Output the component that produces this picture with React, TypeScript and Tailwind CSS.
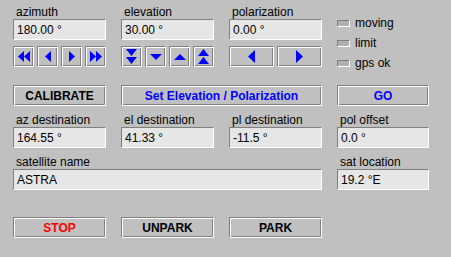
import React from "react";

const BLUE = "#0000ff";

function Field({ label, value, className = "" }: { label: string; value: string; className?: string }) {
  return (
    <div className={`flex flex-col ${className}`}>
      <span className="h-[14px] pl-[3px] text-[12px] leading-[14px] text-black">{label}</span>
      <div className="flex h-[21px] items-center border border-b-white border-l-[#808080] border-r-white border-t-[#808080] bg-[#e6e6e6] pl-[3px] text-[12px] leading-[14px] text-black">
        {value}
      </div>
    </div>
  );
}

function Btn({
  children,
  className = "",
}: {
  children: React.ReactNode;
  className?: string;
}) {
  return (
    <div
      className={`flex h-[21px] items-center justify-center border border-b-white border-l-[#808080] border-r-white border-t-[#808080] bg-[#c0c0c0] text-[12px] font-bold leading-[14px] shadow-[inset_1px_1px_0_#ffffff,inset_-1px_-1px_0_#808080] ${className}`}
    >
      {children}
    </div>
  );
}

function Tri({ w, h, points }: { w: number; h: number; points: string[] }) {
  return (
    <svg width={w} height={h} viewBox={`0 0 ${w} ${h}`}>
      {points.map((p) => (
        <polygon key={p} points={p} fill={BLUE} />
      ))}
    </svg>
  );
}

function Led({ label }: { label: string }) {
  return (
    <div className="flex h-[14px] items-center gap-[5px]">
      <div className="h-[7px] w-[13px] border border-b-white border-l-[#808080] border-r-white border-t-[#808080] bg-[#b0b0b0]" />
      <span className="text-[12px] leading-[14px] text-black">{label}</span>
    </div>
  );
}

export default function App() {
  return (
    <div className="h-[257px] w-[451px] overflow-hidden bg-[#c0c0c0] pl-[13px] pt-[5px] font-['Liberation_Sans',Arial,sans-serif]">
      {/* top controls */}
      <div className="flex gap-[15px]">
        <div className="flex w-[93px] flex-col">
          <Field label="azimuth" value="180.00 °" />
          <div className="mt-[6px] flex justify-between">
            <Btn className="w-[21px]">
              <Tri w={12} h={11} points={["0,5.5 6,0 6,11", "6,5.5 12,0 12,11"]} />
            </Btn>
            <Btn className="w-[21px]">
              <Tri w={6} h={11} points={["0,5.5 6,0 6,11"]} />
            </Btn>
            <Btn className="w-[21px]">
              <Tri w={6} h={11} points={["0,0 6,5.5 0,11"]} />
            </Btn>
            <Btn className="w-[21px]">
              <Tri w={12} h={11} points={["0,0 6,5.5 0,11", "6,0 12,5.5 6,11"]} />
            </Btn>
          </div>
        </div>
        <div className="flex w-[93px] flex-col">
          <Field label="elevation" value="30.00 °" />
          <div className="mt-[6px] flex justify-between">
            <Btn className="w-[21px]">
              <Tri w={11} h={15} points={["0,0 11,0 5.5,7", "0,8 11,8 5.5,15"]} />
            </Btn>
            <Btn className="w-[21px]">
              <Tri w={12} h={6} points={["0,0 12,0 6,6"]} />
            </Btn>
            <Btn className="w-[21px]">
              <Tri w={12} h={6} points={["0,6 12,6 6,0"]} />
            </Btn>
            <Btn className="w-[21px]">
              <Tri w={11} h={15} points={["0,7 11,7 5.5,0", "0,15 11,15 5.5,8"]} />
            </Btn>
          </div>
        </div>
        <div className="flex w-[93px] flex-col">
          <Field label="polarization" value="0.00 °" />
          <div className="mt-[6px] flex justify-between">
            <Btn className="w-[45px]">
              <Tri w={7} h={13} points={["0,6.5 7,0 7,13"]} />
            </Btn>
            <Btn className="w-[45px]">
              <Tri w={7} h={13} points={["0,0 7,6.5 0,13"]} />
            </Btn>
          </div>
        </div>
        <div className="mt-[11px] flex flex-col gap-[6px]">
          <Led label="moving" />
          <Led label="limit" />
          <Led label="gps ok" />
        </div>
      </div>

      {/* action row */}
      <div className="mt-[15px] flex gap-[15px]">
        <Btn className="w-[93px] text-black">CALIBRATE</Btn>
        <Btn className="w-[201px] text-[#0000ff]">Set Elevation / Polarization</Btn>
        <Btn className="w-[92px] text-[#0000ff]">GO</Btn>
      </div>

      {/* destinations */}
      <div className="mt-[7px] flex gap-[15px]">
        <Field className="w-[93px]" label="az destination" value="164.55 °" />
        <Field className="w-[93px]" label="el destination" value="41.33 °" />
        <Field className="w-[93px]" label="pl destination" value="-11.5 °" />
        <Field className="w-[92px]" label="pol offset" value="0.0 °" />
      </div>

      {/* satellite */}
      <div className="mt-[7px] flex gap-[15px]">
        <Field className="w-[309px]" label="satellite name" value="ASTRA" />
        <Field className="w-[92px]" label="sat location" value="19.2 °E" />
      </div>

      {/* bottom buttons */}
      <div className="mt-[27px] flex gap-[15px]">
        <Btn className="w-[93px] text-[#ff0000]">STOP</Btn>
        <Btn className="w-[93px] text-black">UNPARK</Btn>
        <Btn className="w-[93px] text-black">PARK</Btn>
      </div>
    </div>
  );
}
